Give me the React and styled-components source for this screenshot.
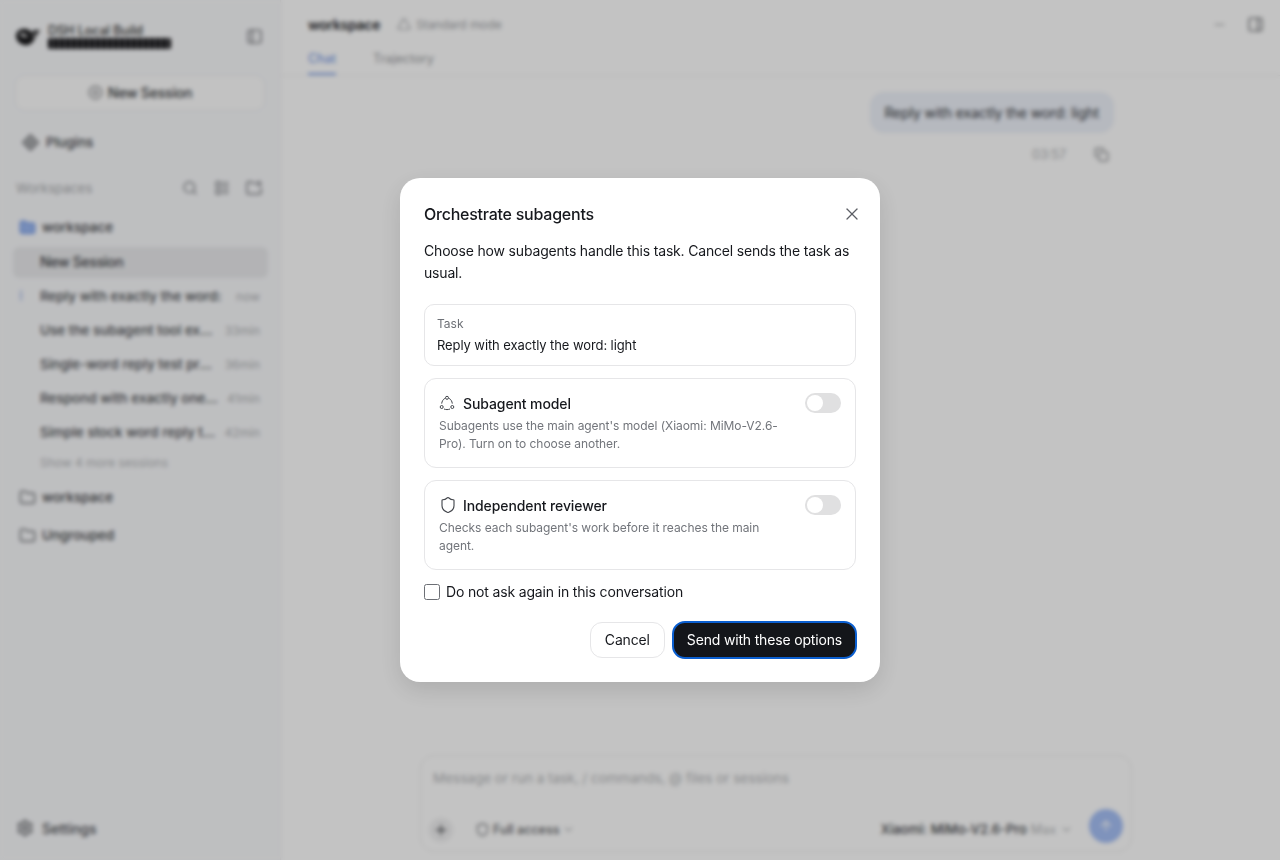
import React from 'react';
import styled, { createGlobalStyle } from 'styled-components';
import {
  ArrowUp,
  ChevronDown,
  CirclePlus,
  Copy,
  Folder,
  LayoutList,
  Minus,
  PanelLeft,
  PanelRight,
  Plus,
  Search,
  Settings,
  Shield,
  Triangle,
  X,
} from 'lucide-react';

const GlobalStyle = createGlobalStyle`
  html, body {
    margin: 0;
    height: 100%;
    overflow: hidden;
    font-family: Inter, "Liberation Sans", sans-serif;
    color: #16181d;
    background: #fff;
  }
  * { box-sizing: border-box; }
`;

const sessions = [
  { title: 'Reply with exactly the word:', time: 'now', active: true },
  { title: 'Use the subagent tool exactly once', time: '33min' },
  { title: 'Single-word reply test prompt', time: '36min' },
  { title: 'Respond with exactly one word', time: '41min' },
  { title: 'Simple stock word reply test', time: '42min' },
];

// small drawings that lucide has no match for
const LogoMark = () => (
  <svg width="26" height="22" viewBox="0 0 26 22">
    <path d="M1 11C1 6 6 3 11 4c3 .6 5 2 6 4l2-3h6l-6 10c-2 4-6 6-10 5-5-1-8-5-8-9Z" fill="#1a1a1c" />
    <path d="M4 9c3-2 7-1 9 3-3 1-7 0-9-3Z" fill="#c8c8ca" />
    <path d="M17 9l2 4 3-7" fill="none" stroke="#c8c8ca" strokeWidth="1" />
  </svg>
);

const PluginIcon = () => (
  <svg width="17" height="17" viewBox="0 0 17 17" fill="none" stroke="#4d4f53" strokeWidth="1.5">
    <path d="M8.5 1 16 8.5 8.5 16 1 8.5Z" strokeLinejoin="round" />
    <circle cx="8.5" cy="8.5" r="2.6" />
  </svg>
);

const NewFolderIcon = () => (
  <svg width="18" height="18" viewBox="0 0 18 18" fill="none" stroke="#7d7f84" strokeWidth="1.5" strokeLinecap="round">
    <path d="M10 4H7.5L6 2.8H3.5A1.5 1.5 0 0 0 2 4.3v9.2A1.5 1.5 0 0 0 3.5 15h11a1.5 1.5 0 0 0 1.5-1.5V9" />
    <path d="M14 2v5M11.5 4.5h5" />
  </svg>
);

const AgentsIcon = () => (
  <svg width="16" height="16" viewBox="0 0 16 16" fill="none" stroke="#43464c" strokeWidth="1">
    <circle cx="8" cy="2.8" r="1.5" />
    <circle cx="2.7" cy="12" r="1.5" />
    <circle cx="13.3" cy="12" r="1.5" />
    <path d="M5.9 3.4C4 4.4 2.9 6.4 2.7 8.6" />
    <path d="M10.1 3.4c1.9 1 3 3 3.2 5.2" />
    <path d="M5 14c1.9.8 4.1.8 6 0" />
  </svg>
);

const Page = styled.div`
  display: flex;
  width: 1280px;
  height: 860px;
  overflow: hidden;
`;

const Sidebar = styled.aside`
  display: flex;
  flex-direction: column;
  flex: 0 0 280px;
  padding: 0 12px 0 13px;
  background: #f9fafc;
  border-right: 1px solid #f0f0f0;
`;

const Brand = styled.div`
  display: flex;
  align-items: center;
  height: 72px;
  padding: 0 2px;
`;

const BrandText = styled.div`
  display: flex;
  flex-direction: column;
  margin-left: 7px;
  flex: 1;
`;

const BrandName = styled.div`
  font-size: 12.5px;
  line-height: 13px;
  font-weight: 500;
  color: #333;
`;

const BrandBar = styled.div`
  width: 123px;
  height: 11px;
  margin-top: 1px;
  border-radius: 2px;
  background: repeating-linear-gradient(90deg, #0a0a0c 0 4px, #77777d 4px 6px);
`;

const IconButton = styled.span`
  display: inline-flex;
  align-items: center;
  justify-content: center;
  width: ${(p) => p.$size || 18}px;
  height: ${(p) => p.$size || 18}px;
  margin-right: ${(p) => p.$end || 0}px;
  color: ${(p) => p.$color || '#7d7f84'};
`;

const NewSessionButton = styled.div`
  display: flex;
  align-items: center;
  justify-content: center;
  gap: 5px;
  width: 250px;
  height: 36px;
  margin: 3px 0 0 2px;
  padding-bottom: 1px;
  border-radius: 10px;
  border: 1px solid #ecedee;
  background: #fefefe;
  font-size: 14px;
  letter-spacing: -0.2px;
  font-weight: 500;
  color: #3a3c40;
`;

const PluginsRow = styled.div`
  display: flex;
  align-items: center;
  gap: 7px;
  height: 22px;
  margin: 20px 0 0 9px;
  font-size: 13.5px;
  font-weight: 500;
  color: #3f4145;
`;

const SectionHead = styled.div`
  display: flex;
  align-items: center;
  height: 20px;
  margin: 25px 0 0 3px;
  padding-right: 5px;
  font-size: 13px;
  color: #a9abae;
`;

const SectionTitle = styled.span`
  flex: 1;
`;

const SectionTools = styled.div`
  display: flex;
  gap: 14px;
`;

const FolderRow = styled.div`
  display: flex;
  align-items: center;
  gap: 6px;
  height: 22px;
  margin: ${(p) => p.$top}px 0 0 6px;
  font-size: 13.5px;
  font-weight: 500;
  color: #3f4145;
`;

const CurrentSession = styled.div`
  display: flex;
  align-items: center;
  width: 255px;
  height: 31px;
  margin-top: 9px;
  padding: 0 0 2px 27px;
  border-radius: 6px;
  background: #eaebed;
  font-size: 14px;
  letter-spacing: -0.3px;
  font-weight: 500;
  color: #3f4145;
`;

const SessionList = styled.div`
  display: flex;
  flex-direction: column;
  margin-top: 1px;
`;

const SessionRow = styled.div`
  position: relative;
  display: flex;
  align-items: center;
  gap: 6px;
  height: 34px;
  padding: 0 8px 0 27px;
  width: 255px;
  font-size: 13.5px;
  font-weight: 500;
  color: #4a4c50;
`;

const SessionTitle = styled.span`
  flex: 1;
  min-width: 0;
  white-space: nowrap;
  overflow: hidden;
  text-overflow: ellipsis;
`;

const SessionTime = styled.span`
  font-size: 12px;
  font-weight: 400;
  color: #aeb0b3;
`;

const SessionMark = styled.span`
  position: absolute;
  left: 7px;
  top: 11px;
  width: 2px;
  height: 11px;
  border-radius: 1px;
  background: #b9c8ec;
`;

const ShowMore = styled.div`
  height: 20px;
  margin: 4px 0 0 27px;
  line-height: 20px;
  font-size: 12px;
  color: #b3b5b8;
`;

const SettingsRow = styled.div`
  display: flex;
  align-items: center;
  gap: 8px;
  margin: auto 0 21px 3px;
  height: 22px;
  font-size: 14px;
  font-weight: 500;
  color: #4a4c50;
`;

const Main = styled.main`
  display: flex;
  flex-direction: column;
  flex: 1;
  background: #ffffff;
`;

const Header = styled.header`
  height: 76px;
  padding: 13px 16px 0 27px;
  border-bottom: 1px solid #f1f1f1;
`;

const HeaderTop = styled.div`
  display: flex;
  align-items: center;
  height: 22px;
`;

const HeaderName = styled.span`
  font-size: 14px;
  letter-spacing: -0.3px;
  font-weight: 600;
  color: #26282c;
`;

const ModeTag = styled.span`
  display: inline-flex;
  align-items: center;
  gap: 5px;
  margin-left: 17px;
  font-size: 12px;
  letter-spacing: -0.1px;
  color: #a2a4a8;
`;

const HeaderTools = styled.div`
  display: flex;
  align-items: center;
  gap: 18px;
  margin-left: auto;
`;

const Tabs = styled.div`
  display: flex;
  gap: 37px;
  margin-top: 16px;
`;

const Tab = styled.span`
  height: 24px;
  font-size: 12.5px;
  font-weight: 500;
  color: ${(p) => (p.$active ? '#7f9fe6' : '#a8aaad')};
  border-bottom: 2px solid ${(p) => (p.$active ? '#7f9fe6' : 'transparent')};
`;

const Thread = styled.div`
  display: flex;
  flex-direction: column;
  align-items: flex-end;
  flex: 1;
  padding: 16px 166px 0 0;
`;

const Bubble = styled.div`
  height: 41px;
  padding: 0 15px 0 14px;
  border-radius: 14px;
  line-height: 41px;
  font-size: 14px;
  letter-spacing: -0.1px;
  color: #34363b;
  background: #eef2fa;
`;

const MessageMeta = styled.div`
  display: flex;
  align-items: center;
  gap: 28px;
  height: 20px;
  margin-top: 11px;
  padding-right: 5px;
  font-size: 12.5px;
  color: #b0b2b5;
`;

const Composer = styled.div`
  display: flex;
  flex-direction: column;
  width: 712px;
  height: 97px;
  margin: 0 0 8px 139px;
  padding: 13px 8px 8px 12px;
  border: 1px solid #f0f0f0;
  border-radius: 14px;
  background: #fff;
`;

const Placeholder = styled.div`
  font-size: 13.5px;
  line-height: 18px;
  color: #b3b5b8;
`;

const ComposerBar = styled.div`
  display: flex;
  align-items: center;
  margin-top: auto;
`;

const AddCircle = styled.span`
  display: inline-flex;
  align-items: center;
  justify-content: center;
  width: 24px;
  height: 24px;
  margin: 8px 0 0 -4px;
  border-radius: 50%;
  background: #f0f0f1;
`;

const AccessPick = styled.span`
  display: inline-flex;
  align-items: center;
  gap: 3px;
  margin: 6px 0 0 22px;
  font-size: 12.5px;
  font-weight: 500;
  color: #606266;
`;

const ModelPick = styled.span`
  display: inline-flex;
  align-items: center;
  gap: 4px;
  margin: 6px 0 0 auto;
  font-size: 13px;
  font-weight: 500;
  color: #44464a;
`;

const ModelEffort = styled.span`
  font-size: 12.5px;
  font-weight: 400;
  color: #b4b6b9;
`;

const SendRound = styled.span`
  display: inline-flex;
  align-items: center;
  justify-content: center;
  width: 34px;
  height: 34px;
  margin-left: 16px;
  border-radius: 50%;
  background: #a6c0f6;
  color: #fff;
`;

const Overlay = styled.div`
  position: fixed;
  inset: 0;
  display: flex;
  align-items: flex-start;
  justify-content: center;
  padding-top: 178px;
  background: rgba(0, 0, 0, 0.235);
  backdrop-filter: blur(2px);
`;

const Modal = styled.div`
  display: flex;
  flex-direction: column;
  width: 480px;
  height: 504px;
  padding: 24px;
  border-radius: 20px;
  background: #fff;
  box-shadow: 0 8px 24px rgba(0, 0, 0, 0.12);
`;

const ModalHead = styled.div`
  display: flex;
  align-items: center;
  justify-content: space-between;
  height: 24px;
`;

const ModalTitle = styled.h2`
  margin: 0;
  font-size: 16px;
  letter-spacing: -0.24px;
  font-weight: 500;
  color: #16181d;
`;

const CloseButton = styled.button`
  display: inline-flex;
  margin-right: -6px;
  padding: 0;
  border: 0;
  background: none;
  color: #5c5f65;
`;

const ModalText = styled.p`
  margin: 14px 0 0;
  font-size: 14px;
  letter-spacing: -0.18px;
  line-height: 22px;
  color: #16181d;
`;

const TaskBox = styled.div`
  height: 62px;
  margin-top: 20px;
  padding: 11px 12px;
  border: 1px solid #e6e6e8;
  border-radius: 10px;
`;

const TaskLabel = styled.div`
  font-size: 12px;
  line-height: 16px;
  color: #6e7177;
`;

const TaskValue = styled.div`
  margin-top: 3px;
  font-size: 13px;
  letter-spacing: -0.09px;
  line-height: 20px;
  color: #16181d;
`;

const OptionCard = styled.div`
  position: relative;
  height: 90px;
  margin-top: 12px;
  padding: 13px 14px 0;
  border: 1px solid #e6e6e8;
  border-radius: 12px;
`;

const OptionHead = styled.div`
  display: flex;
  align-items: center;
  gap: ${(p) => p.$gap}px;
  height: 22px;
  font-size: 14px;
  letter-spacing: -0.1px;
  font-weight: 500;
  color: #16181d;
`;

const OptionText = styled.div`
  width: 350px;
  margin-top: 3px;
  font-size: 12px;
  letter-spacing: -0.05px;
  line-height: 18px;
  color: #72757b;
`;

const Switch = styled.span`
  position: absolute;
  top: 14px;
  right: 14px;
  width: 36px;
  height: 20px;
  padding: 2px;
  border-radius: 10px;
  background: #e0e0e1;
`;

const SwitchKnob = styled.span`
  display: block;
  width: 16px;
  height: 16px;
  border-radius: 50%;
  background: #fff;
`;

const CheckRow = styled.label`
  display: flex;
  align-items: center;
  gap: 6px;
  height: 20px;
  margin-top: 12px;
  font-size: 14px;
  letter-spacing: -0.16px;
  line-height: 18px;
  color: #16181d;
`;

const CheckBox = styled.span`
  width: 16px;
  height: 16px;
  border: 1px solid #6c6f75;
  border-radius: 2.5px;
  background: #fff;
`;

const ModalActions = styled.div`
  display: flex;
  justify-content: flex-end;
  gap: 8px;
  margin-top: 20px;
`;

const CancelButton = styled.button`
  height: 36px;
  padding: 0 14px 2px;
  border: 1px solid #e6e6e8;
  border-radius: 12px;
  background: #fff;
  font: 400 14px Inter, "Liberation Sans", sans-serif;
  letter-spacing: -0.15px;
  color: #16181d;
`;

const SendButton = styled.button`
  height: 36px;
  padding: 0 14px 2px;
  border: 0;
  border-radius: 12px;
  background: #14161a;
  outline: 2px solid #0b5fd0;
  outline-offset: -1px;
  font: 400 14px Inter, "Liberation Sans", sans-serif;
  letter-spacing: -0.17px;
  color: #fff;
`;

export default function App() {
  return (
    <>
      <GlobalStyle />
      <Page>
        <Sidebar>
          <Brand>
            <LogoMark />
            <BrandText>
              <BrandName>DSH Local Build</BrandName>
              <BrandBar />
            </BrandText>
            <IconButton $color="#707276" $end={3}>
              <PanelLeft size={17} />
            </IconButton>
          </Brand>
          <NewSessionButton>
            <CirclePlus size={15} color="#707276" />
            New Session
          </NewSessionButton>
          <PluginsRow>
            <PluginIcon />
            Plugins
          </PluginsRow>
          <SectionHead>
            <SectionTitle>Workspaces</SectionTitle>
            <SectionTools>
              <IconButton><Search size={16} /></IconButton>
              <IconButton><LayoutList size={16} /></IconButton>
              <IconButton><NewFolderIcon /></IconButton>
            </SectionTools>
          </SectionHead>
          <FolderRow $top={18}>
            <Folder size={17} color="#6f96e8" fill="#9dbaf2" />
            workspace
          </FolderRow>
          <CurrentSession>New Session</CurrentSession>
          <SessionList>
            {sessions.map((s) => (
              <SessionRow key={s.time}>
                {s.active && <SessionMark />}
                <SessionTitle>{s.title}</SessionTitle>
                <SessionTime>{s.time}</SessionTime>
              </SessionRow>
            ))}
          </SessionList>
          <ShowMore>Show 4 more sessions</ShowMore>
          <FolderRow $top={13}>
            <Folder size={17} color="#6b6d71" />
            workspace
          </FolderRow>
          <FolderRow $top={16}>
            <Folder size={17} color="#6b6d71" />
            Ungrouped
          </FolderRow>
          <SettingsRow>
            <Settings size={18} color="#55575b" />
            Settings
          </SettingsRow>
        </Sidebar>
        <Main>
          <Header>
            <HeaderTop>
              <HeaderName>workspace</HeaderName>
              <ModeTag>
                <Triangle size={14} color="#a2a4a8" />
                Standard mode
              </ModeTag>
              <HeaderTools>
                <IconButton $color="#a6a8ab"><Minus size={15} /></IconButton>
                <IconButton $color="#707276"><PanelRight size={17} /></IconButton>
              </HeaderTools>
            </HeaderTop>
            <Tabs>
              <Tab $active>Chat</Tab>
              <Tab>Trajectory</Tab>
            </Tabs>
          </Header>
          <Thread>
            <Bubble>Reply with exactly the word: light</Bubble>
            <MessageMeta>
              03:57
              <Copy size={15} color="#808286" />
            </MessageMeta>
          </Thread>
          <Composer>
            <Placeholder>Message or run a task, / commands, @ files or sessions</Placeholder>
            <ComposerBar>
              <AddCircle><Plus size={16} color="#45474b" /></AddCircle>
              <AccessPick>
                <Shield size={15} color="#77797d" />
                Full access
                <ChevronDown size={13} color="#b0b2b5" />
              </AccessPick>
              <ModelPick>
                Xiaomi: MiMo-V2.6-Pro <ModelEffort>Max</ModelEffort>
                <ChevronDown size={13} color="#b0b2b5" />
              </ModelPick>
              <SendRound><ArrowUp size={16} /></SendRound>
            </ComposerBar>
          </Composer>
        </Main>
      </Page>
      <Overlay>
        <Modal>
          <ModalHead>
            <ModalTitle>Orchestrate subagents</ModalTitle>
            <CloseButton><X size={20} strokeWidth={1.5} /></CloseButton>
          </ModalHead>
          <ModalText>Choose how subagents handle this task. Cancel sends the task as usual.</ModalText>
          <TaskBox>
            <TaskLabel>Task</TaskLabel>
            <TaskValue>Reply with exactly the word: light</TaskValue>
          </TaskBox>
          <OptionCard>
            <OptionHead $gap={8}>
              <AgentsIcon />
              Subagent model
            </OptionHead>
            <OptionText>
              Subagents use the main agent's model (Xiaomi: MiMo-V2.6-Pro). Turn on to choose another.
            </OptionText>
            <Switch><SwitchKnob /></Switch>
          </OptionCard>
          <OptionCard>
            <OptionHead $gap={6}>
              <Shield size={18} strokeWidth={1.5} color="#43464c" />
              Independent reviewer
            </OptionHead>
            <OptionText>Checks each subagent's work before it reaches the main agent.</OptionText>
            <Switch><SwitchKnob /></Switch>
          </OptionCard>
          <CheckRow>
            <CheckBox />
            Do not ask again in this conversation
          </CheckRow>
          <ModalActions>
            <CancelButton>Cancel</CancelButton>
            <SendButton>Send with these options</SendButton>
          </ModalActions>
        </Modal>
      </Overlay>
    </>
  );
}
